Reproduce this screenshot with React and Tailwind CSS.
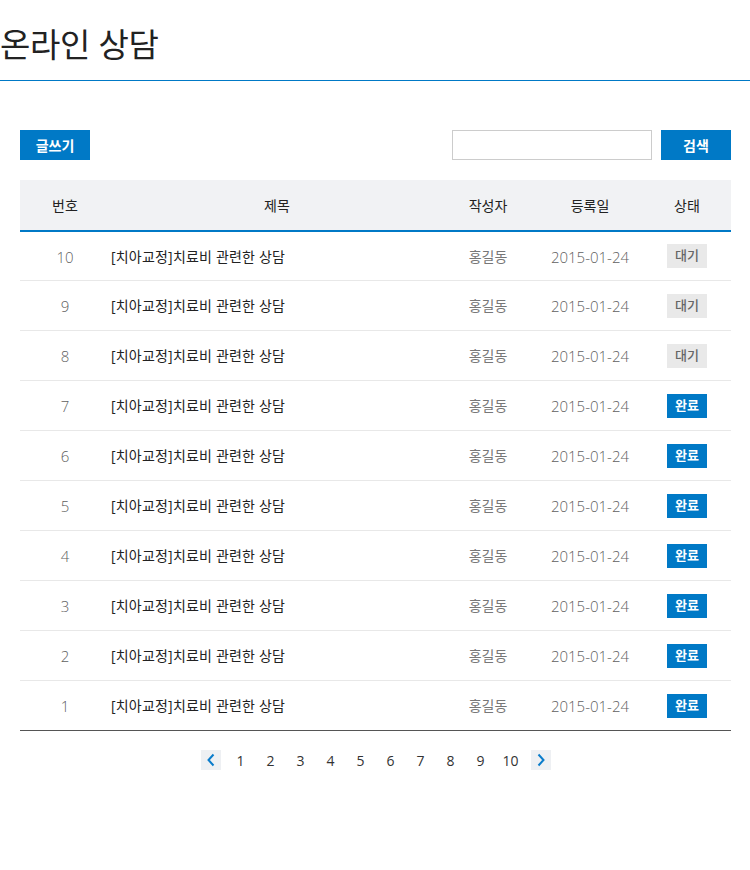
import React from "react";

const rows = [10, 9, 8, 7, 6, 5, 4, 3, 2, 1].map((n) => ({
    no: n,
    title: "[치아교정]치료비 관련한 상담",
    writer: "홍길동",
    date: "2015-01-24",
    done: n <= 7,
}));

const pages = [1, 2, 3, 4, 5, 6, 7, 8, 9, 10];

const Chevron = ({dir}) => (
    <svg width="10" height="14" viewBox="0 0 10 14" fill="none">
        <path
            d={dir === "left" ? "M7.5 1.5 L2.5 7 L7.5 12.5" : "M2.5 1.5 L7.5 7 L2.5 12.5"}
            stroke="#0a7ccb"
            strokeWidth="2"
        />
    </svg>
);

const App = () => {
    return (
        <div
            className="w-[750px] min-h-[870px] bg-white text-[#333]"
            style={{fontFamily: '"Open Sans", "Noto Sans CJK KR", sans-serif'}}
        >
            {/* 타이틀 */}
            <div className="h-[81px] border-b border-[#0079c6] flex items-center pt-[9px]">
                <h1 className="text-[33px] leading-none text-[#222] tracking-[-0.3px]">온라인 상담</h1>
            </div>

            <div className="pl-5 pr-[19px]">
                {/* 툴바 */}
                <div className="flex justify-between items-center mt-[49px]">
                    <button className="w-[70px] h-[30px] bg-[#0079c6] text-white text-[14px] font-bold">글쓰기</button>
                    <div className="flex gap-[9px]">
                        <input className="w-[200px] h-[30px] border border-[#cccccc] outline-none px-2 text-[14px]"/>
                        <button className="w-[70px] h-[30px] bg-[#0079c6] text-white text-[14px] font-bold">검색</button>
                    </div>
                </div>

                {/* 목록 */}
                <div className="mt-5 border-b border-[#555]">
                    <div className="grid grid-cols-[90px_1fr_98px_106px_88px] h-[52px] bg-[#f1f2f4] border-b-2 border-[#0079c6] items-center text-center text-[14px] text-[#222]">
                        <div>번호</div>
                        <div className="pl-[5px]">제목</div>
                        <div>작성자</div>
                        <div>등록일</div>
                        <div>상태</div>
                    </div>
                    {rows.map((r, i) => (
                        <div
                            key={r.no}
                            className={`grid grid-cols-[90px_1fr_98px_106px_88px] items-center text-[14px] ${
                                i === 0 ? "h-[48px]" : "h-[50px] border-t border-[#e8e8e8]"
                            }`}
                        >
                            <div className="text-center text-[#5f5f5f] text-[15px] font-light pt-[2px]">{r.no}</div>
                            <div className="text-[#222] pl-[1px] tracking-[0.2px]">{r.title}</div>
                            <div className="text-center text-[#777]">{r.writer}</div>
                            <div className="text-center text-[#5f5f5f] text-[15px] font-light pt-[2px]">{r.date}</div>
                            <div className="flex justify-center">
                                {r.done ? (
                                    <span className="w-10 h-6 flex items-center justify-center bg-[#0079c6] text-white text-[13px] font-bold">완료</span>
                                ) : (
                                    <span className="w-10 h-6 flex items-center justify-center bg-[#e9e9e9] text-[#666] text-[13px] font-medium">대기</span>
                                )}
                            </div>
                        </div>
                    ))}
                </div>

                {/* 페이지 */}
                <div className="flex justify-center gap-[10px] mt-[19px]">
                    <button className="w-5 h-5 bg-[#eef0f3] flex items-center justify-center"><Chevron dir="left"/></button>
                    {pages.map((p) => (
                        <span key={p} className="w-5 h-5 flex items-center justify-center text-[14px] text-[#333]">{p}</span>
                    ))}
                    <button className="w-5 h-5 bg-[#eef0f3] flex items-center justify-center"><Chevron dir="right"/></button>
                </div>
            </div>
        </div>
    );
};

export default App;
